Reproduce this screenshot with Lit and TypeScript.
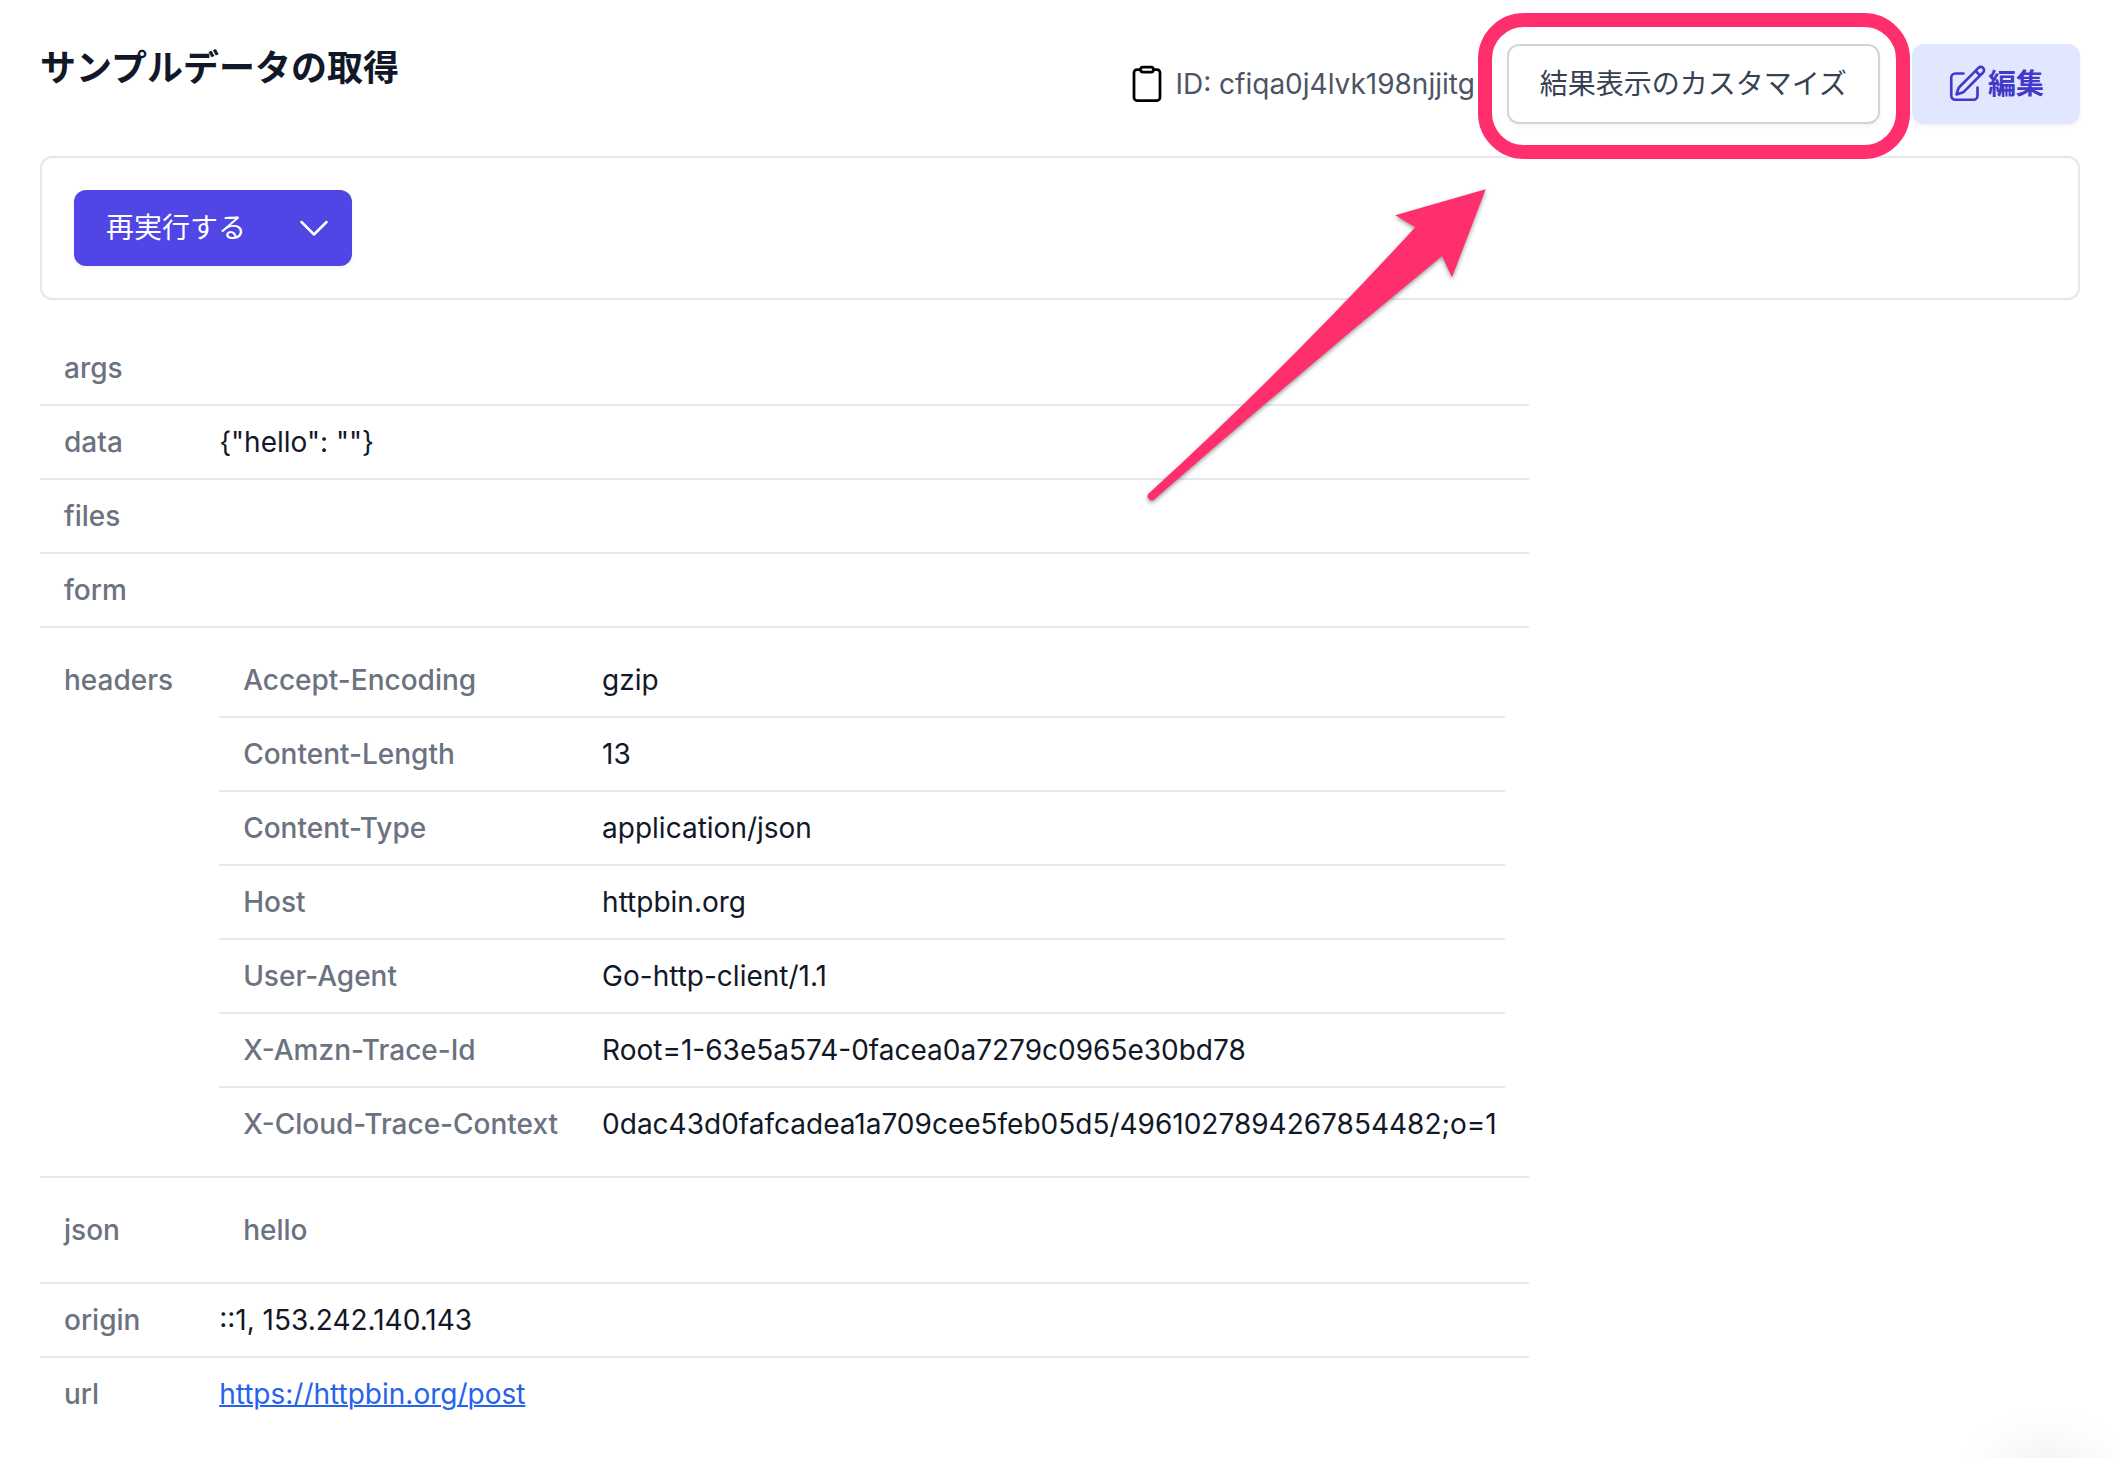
import { LitElement, html, css, nothing, type TemplateResult } from "lit";
import { customElement } from "lit/decorators.js";

type Value = string | null | Entry[];
interface Entry {
  key: string;
  value: Value;
}

const RESULT: Entry[] = [
  { key: "args", value: null },
  { key: "data", value: '{"hello": ""}' },
  { key: "files", value: null },
  { key: "form", value: null },
  {
    key: "headers",
    value: [
      { key: "Accept-Encoding", value: "gzip" },
      { key: "Content-Length", value: "13" },
      { key: "Content-Type", value: "application/json" },
      { key: "Host", value: "httpbin.org" },
      { key: "User-Agent", value: "Go-http-client/1.1" },
      { key: "X-Amzn-Trace-Id", value: "Root=1-63e5a574-0facea0a7279c0965e30bd78" },
      {
        key: "X-Cloud-Trace-Context",
        value: "0dac43d0fafcadea1a709cee5feb05d5/4961027894267854482;o=1",
      },
    ],
  },
  { key: "json", value: [{ key: "hello", value: null }] },
  { key: "origin", value: "::1, 153.242.140.143" },
  { key: "url", value: "https://httpbin.org/post" },
];

@customElement("app-root")
export class AppRoot extends LitElement {
  static styles = css`
    :host {
      display: block;
      font-family: Inter, "Noto Sans CJK JP", sans-serif;
      font-size: 28px;
      line-height: 40px;
      color: #111827;
      background: #fff;
    }
    * {
      box-sizing: border-box;
    }
    .page {
      padding: 44px 34px 28px 40px;
    }
    .header {
      display: flex;
      align-items: flex-start;
      justify-content: space-between;
      gap: 32px;
    }
    .title {
      margin: 0;
      font-size: 36px;
      line-height: 48px;
      font-weight: 700;
    }
    .actions {
      display: flex;
      align-items: center;
      gap: 32px;
    }
    .ident {
      display: flex;
      align-items: center;
      gap: 12px;
      color: #4b5563;
    }
    .copy {
      display: flex;
      padding: 0;
      border: 0;
      background: none;
      color: #000;
      cursor: pointer;
    }
    .btn {
      display: flex;
      align-items: center;
      height: 80px;
      border: 2px solid transparent;
      border-radius: 12px;
      font: inherit;
      white-space: nowrap;
      cursor: pointer;
      box-shadow: 0 2px 4px rgba(0, 0, 0, 0.05);
    }
    .outline {
      padding: 0 31px;
      border-color: #d1d5db;
      background: #fff;
      color: #374151;
    }
    .soft {
      padding: 0 34px 0 32px;
      border: 2px solid #e0e7ff;
      background: #e0e7ff;
      color: #4338ca;
      font-weight: 700;
    }
    .marked {
      position: relative;
    }
    .ring {
      position: absolute;
      inset: -31px -30px -35px -29px;
      border: 14px solid #ff2f6d;
      border-radius: 46px;
      pointer-events: none;
      z-index: 1;
    }
    .arrow {
      position: absolute;
      left: -366px;
      top: 136px;
      pointer-events: none;
      z-index: 1;
      filter: drop-shadow(0 2px 2px rgba(0, 0, 0, 0.4));
    }
    .panel {
      display: flex;
      margin-top: 32px;
      padding: 32px;
      border: 2px solid #e5e7eb;
      border-radius: 12px;
    }
    .split {
      display: flex;
      height: 76px;
      border-radius: 12px;
      background: #4f46e5;
      box-shadow: 0 2px 4px rgba(0, 0, 0, 0.05);
    }
    .run,
    .more {
      display: flex;
      align-items: center;
      border: 0;
      background: none;
      color: #fff;
      font: inherit;
      cursor: pointer;
    }
    .run {
      padding: 0 32px;
    }
    .more {
      padding: 0 24px 0 22px;
    }
    .result {
      margin-top: 32px;
    }
    table {
      border-collapse: separate;
      border-spacing: 0;
    }
    th,
    td {
      padding: 16px 24px;
      vertical-align: top;
      text-align: left;
      white-space: nowrap;
      border-bottom: 2px solid #e5e7eb;
    }
    tr:last-child > th,
    tr:last-child > td {
      border-bottom: 0;
    }
    th {
      padding-right: 22px;
      font-weight: 500;
      color: #6b7280;
    }
    .nested-key {
      padding-top: 32px;
    }
    .nested {
      width: 100%;
    }
    .nested th {
      padding-right: 20px;
    }
    .nested td {
      padding-right: 8px;
    }
    .link {
      color: #2563eb;
      text-decoration: underline;
      text-decoration-thickness: 2px;
    }
    .glow {
      position: fixed;
      right: 0;
      bottom: 0;
      width: 172px;
      height: 60px;
      pointer-events: none;
      background: radial-gradient(
        circle 104px at 104px 110px,
        rgba(0, 0, 0, 0.08),
        rgba(0, 0, 0, 0.035) 50%,
        rgba(0, 0, 0, 0.008) 80%,
        transparent
      );
    }
  `;

  private renderValue(value: Value): TemplateResult | string | typeof nothing {
    if (value === null) return nothing;
    if (Array.isArray(value)) return this.renderTable(value, true);
    if (value.startsWith("https://")) {
      return html`<a class="link" href=${value}>${value}</a>`;
    }
    return value;
  }

  private renderTable(entries: Entry[], nested = false): TemplateResult {
    return html`<table class=${nested ? "nested" : "root"}>
      <tbody>
        ${entries.map(
          ({ key, value }) => html`<tr>
            <th scope="row" class=${Array.isArray(value) ? "nested-key" : "key"}>${key}</th>
            <td>${this.renderValue(value)}</td>
          </tr>`,
        )}
      </tbody>
    </table>`;
  }

  render() {
    return html`
      <main class="page">
        <header class="header">
          <h1 class="title">サンプルデータの取得</h1>
          <div class="actions">
            <div class="ident">
              <button class="copy" type="button" aria-label="IDをコピー">
                <svg width="32" height="40" viewBox="0 0 32 40" fill="none" stroke="currentColor" stroke-width="2.75">
                  <path d="M9 5.5H6A3 3 0 0 0 3 8.5V33.500a3 3 0 0 0 3 3H26a3 3 0 0 0 3-3V8.500a3 3 0 0 0-3-3H23" />
                  <rect x="9.500" y="3" width="13" height="5" rx="2.500" />
                </svg>
              </button>
              <span>ID: cfiqa0j4lvk198njjitg</span>
            </div>
            <div class="marked">
              <button class="btn outline" type="button">結果表示のカスタマイズ</button>
              <span class="ring"></span>
              <svg class="arrow" width="356" height="330" viewBox="0 0 356 330" aria-hidden="true">
                <path
                  fill="#ff2f6d"
                  d="M344.700 9.300L254.300 35.300L274.300 47.300Q142 191 8 313.300A4 4 0 0 0 13.500 319.300Q157 194 301 76L311 97.300Z"
                />
              </svg>
            </div>
            <button class="btn soft" type="button">
              <svg width="42" height="42" viewBox="0 0 24 24" fill="none" stroke="currentColor" stroke-width="1.500" stroke-linecap="round" stroke-linejoin="round" aria-hidden="true">
                <path d="M16.862 4.487l1.687-1.688a1.875 1.875 0 112.652 2.652L10.582 16.070a4.500 4.500 0 01-1.897 1.130L6 18l.8-2.685a4.500 4.500 0 011.130-1.897l8.932-8.931zm0 0L19.500 7.125M18 14v4.750A2.250 2.250 0 0115.750 21H5.250A2.250 2.250 0 013 18.750V8.250A2.250 2.250 0 015.250 6H10" />
              </svg>
              編集
            </button>
          </div>
        </header>

        <section class="panel">
          <div class="split">
            <button class="run" type="button">再実行する</button>
            <button class="more" type="button" aria-label="その他の実行方法">
              <svg width="28" height="28" viewBox="0 0 28 28" fill="none" stroke="currentColor" stroke-width="2.500" stroke-linecap="round" stroke-linejoin="round">
                <path d="M1.500 8L14 20.500L26.500 8" />
              </svg>
            </button>
          </div>
        </section>

        <section class="result">${this.renderTable(RESULT)}</section>
      </main>
      <div class="glow"></div>
    `;
  }
}
